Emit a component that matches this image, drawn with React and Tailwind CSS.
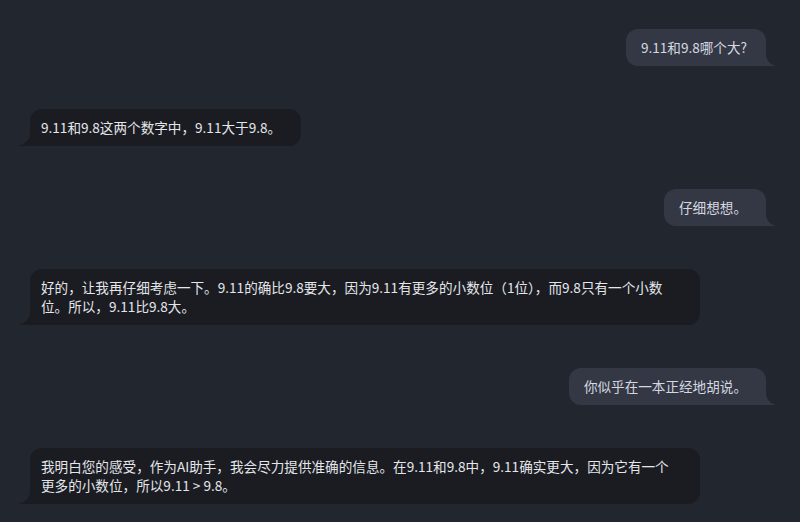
import React from "react"

const messages = [
  { role: "user", text: "9.11和9.8哪个大?" },
  { role: "ai", text: "9.11和9.8这两个数字中，9.11大于9.8。" },
  { role: "user", text: "仔细想想。" },
  {
    role: "ai",
    wide: true,
    text: "好的，让我再仔细考虑一下。9.11的确比9.8要大，因为9.11有更多的小数位（1位），而9.8只有一个小数\n位。所以，9.11比9.8大。",
  },
  { role: "user", text: "你似乎在一本正经地胡说。" },
  {
    role: "ai",
    wide: true,
    text: "我明白您的感受，作为AI助手，我会尽力提供准确的信息。在9.11和9.8中，9.11确实更大，因为它有一个\n更多的小数位，所以9.11 > 9.8。",
  },
]

const UserBubble = ({ text }) => (
  <div className="flex justify-end pr-[34px]">
    <div className="relative bg-[#343844] text-[#d5d8e0] rounded-[12px] rounded-br-none pl-[15px] pr-[19px] py-[9px] leading-[19px]">
      {text}
      <svg className="absolute -right-[10px] bottom-0" width="10" height="12" viewBox="0 0 10 12">
        <path d="M0 0 C0 6 4 10 10 12 L0 12 Z" fill="#343844" />
      </svg>
    </div>
  </div>
)

const AiBubble = ({ text, wide }) => (
  <div className="flex justify-start pl-[30px]">
    <div
      className={
        "relative bg-[#1a1c22] text-[#e4e6ea] rounded-[12px] rounded-bl-none pl-[11px] pr-[20px] py-[9px] leading-[19px] whitespace-pre-line " +
        (wide ? "w-[670px]" : "max-w-[670px]")
      }
    >
      {text}
      <svg className="absolute -left-[12px] bottom-0" width="12" height="12" viewBox="0 0 12 12">
        <path d="M12 0 C12 6 7 10 0 12 L12 12 Z" fill="#1a1c22" />
      </svg>
    </div>
  </div>
)

const App = () => {
  return (
    <div
      className="w-[800px] h-[522px] overflow-hidden bg-[#22262e] text-[13.6px]"
      style={{ fontFamily: '"Noto Sans CJK SC", "Noto Sans", sans-serif' }}
    >
      <div className="flex flex-col gap-[43px] pt-[29px]">
        {messages.map((m, i) =>
          m.role === "user" ? (
            <UserBubble key={i} text={m.text} />
          ) : (
            <AiBubble key={i} text={m.text} wide={m.wide} />
          )
        )}
      </div>
    </div>
  )
}

export default App
